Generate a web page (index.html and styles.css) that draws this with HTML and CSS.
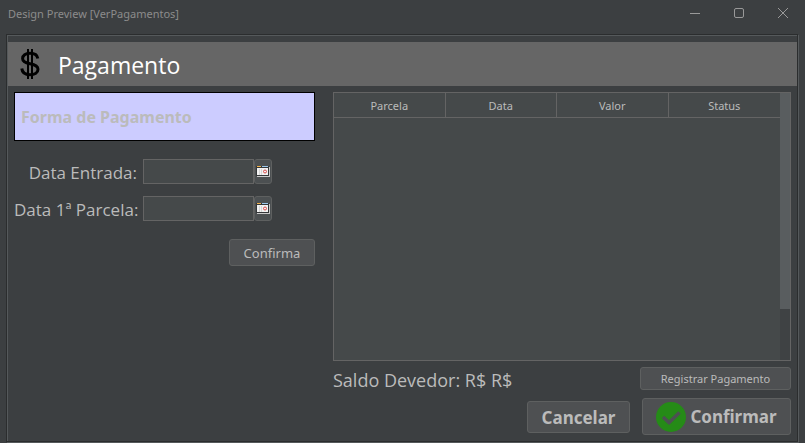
FILE: index.html
```html
<!DOCTYPE html>
<html lang="pt-BR">
<head>
<meta charset="utf-8">
<title>Design Preview [VerPagamentos]</title>
<link rel="stylesheet" href="styles.css">
</head>
<body>
<div class="window">
  <header class="titlebar">
    <span class="title">Design Preview [VerPagamentos]</span>
    <div class="window-controls">
      <button type="button" class="window-button" aria-label="Minimizar"><svg width="12" height="12" viewBox="0 0 12 12"><path d="M1 6.5h10"/></svg></button>
      <button type="button" class="window-button" aria-label="Maximizar"><svg width="12" height="12" viewBox="0 0 12 12"><rect x="1.5" y="1.5" width="9" height="9" rx="1.5"/></svg></button>
      <button type="button" class="window-button" aria-label="Fechar"><svg width="12" height="12" viewBox="0 0 12 12"><path d="M1 1l10 10M11 1L1 11"/></svg></button>
    </div>
  </header>
  <main class="frame">
    <div class="banner">
      <svg class="dollar" width="20" height="30" viewBox="0 0 20 30"><path class="curve" d="M17.8 9.5C17.3 6 14.400 4.300 10 4.300C5.500 4.300 2.600 6.500 2.600 9.500C2.600 12.800 5.500 13.900 10 14.800C14.800 15.700 18 17 18 20.300C18 23.600 14.800 25.700 10 25.700C5.200 25.700 2.200 23.500 1.800 19.500"/><path class="bar" d="M8 0v30M12 0v30"/></svg>
      <h1>Pagamento</h1>
    </div>
    <div class="content">
      <form class="form">
        <div class="payment-type">Forma de Pagamento</div>
        <div class="dates">
          <label for="entrada">Data Entrada:</label>
          <div class="date-field">
            <input id="entrada" type="text">
            <button type="button" class="calendar" aria-label="Escolher data de entrada"><svg width="14" height="11" viewBox="0 0 14 11"><path fill="#c8c8c8" d="M1 1h13v10H1z"/><path fill="#35383a" d="M0 0h13v10H0z"/><path fill="#f2f2f2" d="M1 2h11v7H1z"/><path fill="#f0b14b" d="M1 0h4v1H1z"/><path fill="#9cc7ea" d="M6 0h6v1H6z"/><path fill="#d6d6d6" d="M3 3h1v6H3zM5 3h1v6H5z"/><circle cx="9" cy="5.500" r="1.500" fill="none" stroke="#d94a4a"/></svg></button>
          </div>
          <label for="parcela">Data 1ª Parcela:</label>
          <div class="date-field">
            <input id="parcela" type="text">
            <button type="button" class="calendar" aria-label="Escolher data da primeira parcela"><svg width="14" height="11" viewBox="0 0 14 11"><path fill="#c8c8c8" d="M1 1h13v10H1z"/><path fill="#35383a" d="M0 0h13v10H0z"/><path fill="#f2f2f2" d="M1 2h11v7H1z"/><path fill="#f0b14b" d="M1 0h4v1H1z"/><path fill="#9cc7ea" d="M6 0h6v1H6z"/><path fill="#d6d6d6" d="M3 3h1v6H3zM5 3h1v6H5z"/><circle cx="9" cy="5.500" r="1.500" fill="none" stroke="#d94a4a"/></svg></button>
          </div>
        </div>
        <button type="button" class="button confirm-date">Confirma</button>
      </form>
      <section class="installments">
        <div class="table-pane">
          <div class="table-view">
            <table>
              <thead><tr><th>Parcela</th><th>Data</th><th>Valor</th><th>Status</th></tr></thead>
              <tbody></tbody>
            </table>
          </div>
          <div class="scrollbar"><div class="thumb"></div></div>
        </div>
        <div class="balance-row">
          <p class="balance">Saldo Devedor: R$ R$</p>
          <button type="button" class="button register">Registrar Pagamento</button>
        </div>
        <div class="actions">
          <button type="button" class="button cancel">Cancelar</button>
          <button type="button" class="button confirm"><svg width="30" height="30" viewBox="0 0 30 30"><circle cx="15" cy="15" r="15" fill="#258b17"/><path d="M7 15l6 5.500L23.500 10.500" fill="none" stroke="#4c5052" stroke-width="3.500"/></svg>Confirmar</button>
        </div>
      </section>
    </div>
  </main>
</div>
</body>
</html>
```
FILE: styles.css
```css
* {
  box-sizing: border-box;
}

body {
  margin: 0;
  background: #3c3f41;
  color: #bbbbbb;
  font-family: "Open Sans", "Noto Sans", sans-serif;
}

button,
input {
  font: inherit;
  color: inherit;
}

svg {
  display: block;
  flex: none;
}

.window {
  display: flex;
  flex-direction: column;
  min-height: 100vh;
}

.titlebar {
  display: flex;
  justify-content: space-between;
  height: 34px;
  padding-left: 8px;
  color: #8c8c8c;
  font-family: "Noto Sans", sans-serif;
  font-size: 11px;
  line-height: 28px;
}

.window-controls {
  display: flex;
  height: 26px;
}

.window-button {
  display: grid;
  place-items: center;
  width: 44px;
  padding: 0;
  border: 0;
  background: none;
}

.window-button svg {
  fill: none;
  stroke: #999999;
}

.frame {
  flex: 1;
  display: flex;
  flex-direction: column;
  margin: 0 7px 1px 6px;
  padding: 7px 0 0 1px;
  border: 1px solid #2b2d2e;
  box-shadow: 1px 1px #55595b, inset 1px 1px #55595b;
}

.banner {
  display: flex;
  align-items: center;
  gap: 18px;
  height: 44px;
  padding-left: 12px;
  background: #666666;
  color: #ffffff;
}

.banner h1 {
  margin: 0;
  padding-top: 2px;
  font-size: 23px;
  font-weight: 400;
  line-height: 32px;
}

.dollar {
  fill: none;
  stroke: #000000;
}

.dollar .curve {
  stroke-width: 3;
}

.dollar .bar {
  stroke-width: 2;
}

.content {
  flex: 1;
  display: grid;
  grid-template-columns: 301px minmax(0, 1fr);
  gap: 18px;
  padding: 6px;
}

.form {
  display: flex;
  flex-direction: column;
  gap: 18px;
}

.payment-type {
  padding: 2px 6px 0;
  border: 1px solid #000000;
  background: #ccccff;
  font-family: "Noto Sans", sans-serif;
  font-size: 16px;
  font-weight: 700;
  line-height: 45px;
}

.dates {
  display: grid;
  grid-template-columns: 123px auto;
  justify-content: start;
  gap: 12px 6px;
  font-size: 17px;
  line-height: 23px;
  text-align: right;
  white-space: nowrap;
}

.dates label {
  padding-top: 2px;
}

.date-field {
  display: flex;
  height: 25px;
}

.date-field input {
  width: 111px;
  padding: 0 6px;
  border: 1px solid #646464;
  background: #45494a;
  font-size: 12px;
}

.calendar {
  display: grid;
  place-items: center;
  width: 18px;
  padding: 0;
  border: 1px solid #5e6060;
  border-radius: 3px;
  background: #4c5052;
}

.button {
  padding: 0;
  border: 1px solid #5e6060;
  border-radius: 3px;
  background: #4e5052;
  font-family: "Noto Sans", sans-serif;
}

.confirm-date {
  align-self: flex-end;
  width: 86px;
  height: 27px;
  font-size: 13px;
}

.installments {
  display: flex;
  flex-direction: column;
}

.table-pane {
  flex: 1;
  display: flex;
  border: 1px solid #646464;
  background: #45494a;
}

.table-view {
  flex: 1;
}

table {
  width: 100%;
  border-collapse: separate;
  border-spacing: 0;
  table-layout: fixed;
}

th {
  height: 25px;
  padding: 0;
  border-right: 1px solid #646464;
  border-bottom: 1px solid #646464;
  font-family: "Noto Sans", sans-serif;
  font-size: 11px;
  font-weight: 400;
}

th:last-child {
  border-right: 0;
}

.scrollbar {
  width: 10px;
  background: #3f4244;
}

.thumb {
  height: 81%;
  background: #595d5f;
}

.balance-row {
  display: flex;
  justify-content: space-between;
  height: 23px;
  margin-top: 6px;
}

.balance {
  margin: 0;
  font-size: 18px;
  line-height: 27px;
}

.register {
  width: 151px;
  font-size: 11px;
}

.actions {
  display: flex;
  align-items: center;
  justify-content: flex-end;
  gap: 12px;
  margin-top: 8px;
  font-size: 17px;
  font-weight: 700;
}

.cancel {
  width: 103px;
  height: 32px;
  padding-top: 2px;
}

.confirm {
  display: flex;
  align-items: center;
  justify-content: center;
  gap: 4px;
  width: 149px;
  height: 37px;
}
```
